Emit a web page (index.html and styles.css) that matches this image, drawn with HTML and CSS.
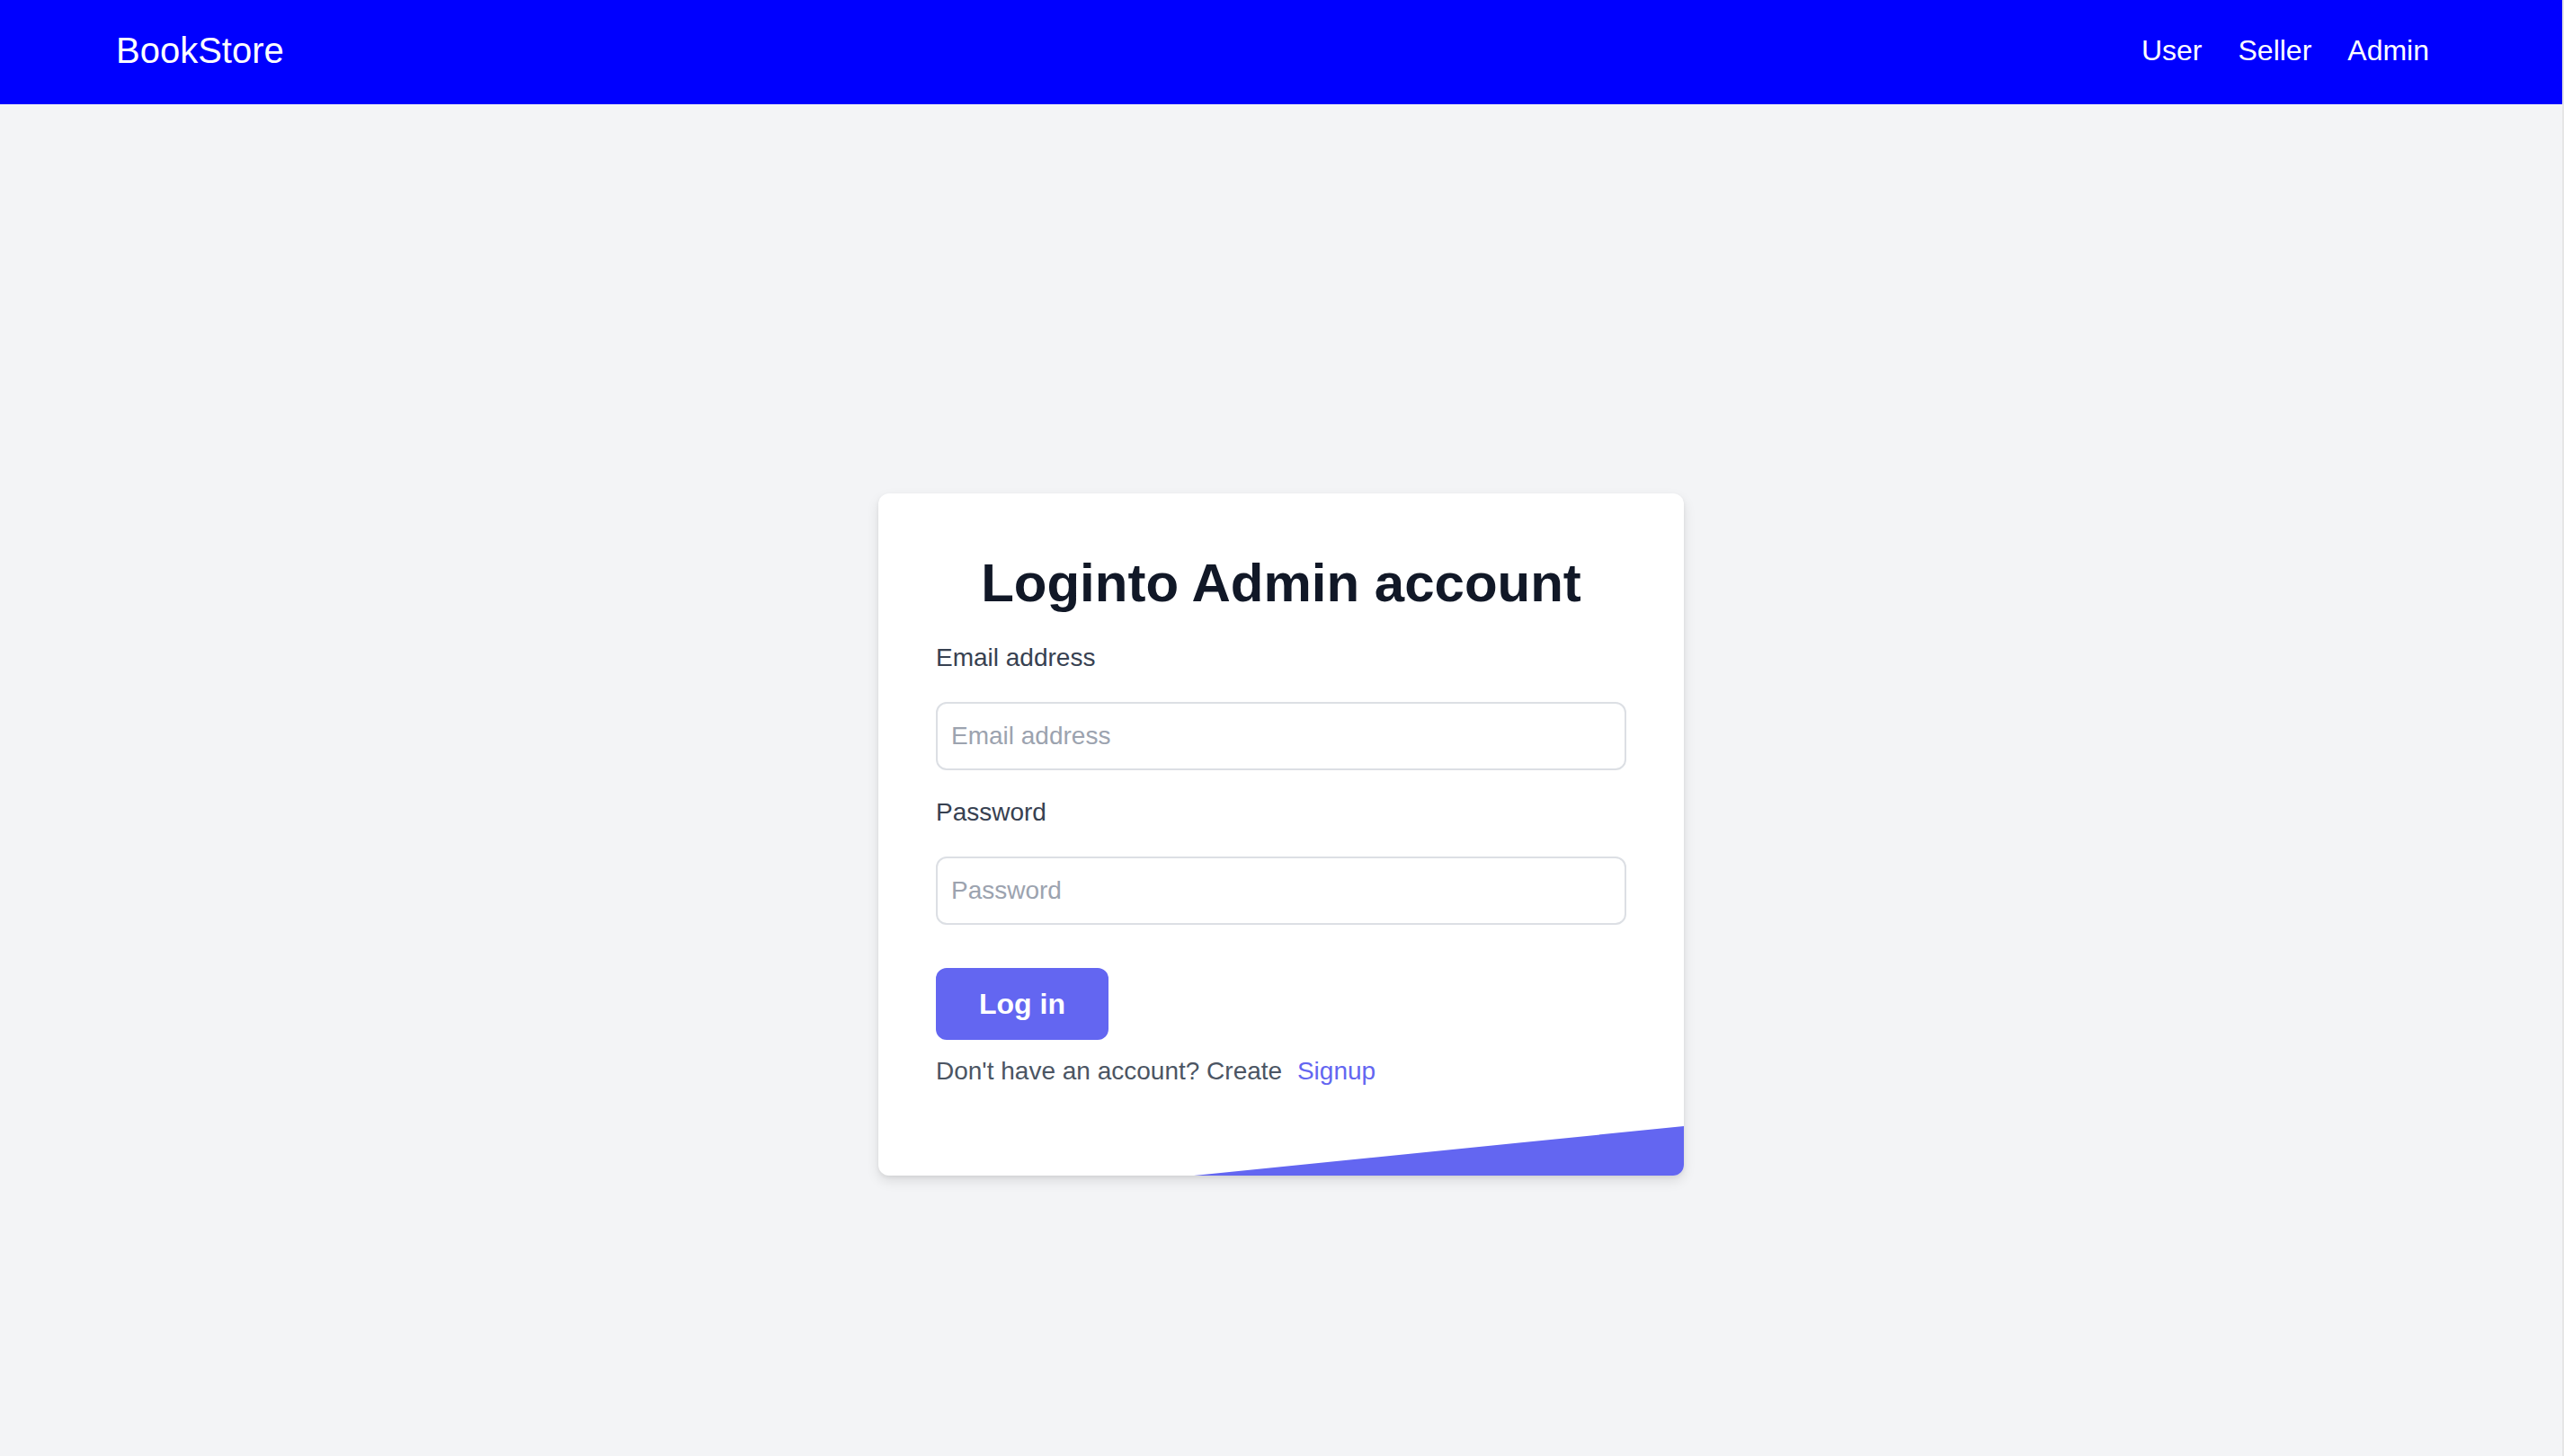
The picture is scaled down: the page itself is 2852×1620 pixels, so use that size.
FILE: index.html
```html
<!DOCTYPE html>
<html lang="en">
<head>
<meta charset="utf-8">
<title>BookStore - Admin Login</title>
<link rel="stylesheet" href="styles.css">
</head>
<body>
  <header class="navbar">
    <a class="brand" href="#">BookStore</a>
    <nav class="nav-links">
      <a href="#">User</a>
      <a href="#">Seller</a>
      <a href="#">Admin</a>
    </nav>
  </header>
  <main class="main">
    <div class="card">
      <h1 class="title">Loginto Admin account</h1>
      <form class="form">
        <label class="label" for="email">Email address</label>
        <input class="input" id="email" type="email" placeholder="Email address">
        <label class="label" for="password">Password</label>
        <input class="input" id="password" type="password" placeholder="Password">
        <button class="btn" type="button">Log in</button>
        <p class="signup">Don't have an account? Create <a href="#" class="signup-link">Signup</a></p>
      </form>
      <svg class="wedge" viewBox="0 0 896 55" preserveAspectRatio="none" aria-hidden="true">
        <polygon points="351,55 896,0 896,55" fill="#6366f1"/>
      </svg>
    </div>
  </main>
</body>
</html>
```
FILE: styles.css
```css
html {
  background: #e6e6e6;
  overflow: hidden;
}
body {
  margin: 0 2px 0 0;
  min-height: 100vh;
  background: #f3f4f6;
  font-family: "Liberation Sans", Arial, Helvetica, sans-serif;
}
.navbar {
  height: 116px;
  background: #0000ff;
  display: flex;
  align-items: center;
  justify-content: space-between;
  padding: 0 148px 0 129px;
  box-sizing: border-box;
}
.brand {
  color: #fff;
  font-size: 40px;
  text-decoration: none;
  margin-top: -3px;
}
.nav-links {
  display: flex;
  gap: 40px;
  margin-top: -3px;
}
.nav-links a {
  color: #fff;
  font-size: 32px;
  text-decoration: none;
}
.main {
  display: flex;
  justify-content: center;
  padding-top: 433px;
}
.card {
  position: relative;
  width: 896px;
  box-sizing: border-box;
  background: #fff;
  border-radius: 12px;
  overflow: hidden;
  padding: 64px 64px 96px;
  box-shadow: 0 6px 14px rgba(0, 0, 0, 0.1), 0 2px 4px rgba(0, 0, 0, 0.06);
}
.title {
  margin: 0 0 27px;
  text-align: center;
  font-size: 60px;
  line-height: 72px;
  font-weight: 700;
  color: #111827;
}
.form {
  display: flex;
  flex-direction: column;
  align-items: flex-start;
}
.label {
  display: block;
  font-size: 28px;
  line-height: 40px;
  color: #374151;
  margin-bottom: 29px;
}
.input {
  width: 100%;
  height: 76px;
  box-sizing: border-box;
  border: 2px solid #dcdfe4;
  border-radius: 12px;
  padding: 0 15px;
  font-family: inherit;
  font-size: 28px;
  color: #111827;
  margin: 0 0 27px;
  outline: none;
  background: #fff;
}
.input::placeholder {
  color: #9ca3af;
}
#password {
  margin-bottom: 48px;
}
.btn {
  width: 192px;
  height: 80px;
  border: none;
  border-radius: 12px;
  background: #6366f1;
  color: #fff;
  font-family: inherit;
  font-size: 32px;
  font-weight: 700;
  cursor: pointer;
  padding: 0;
}
.signup {
  margin: 15px 0 0;
  font-size: 28px;
  line-height: 40px;
  color: #4b5563;
}
.signup-link {
  color: #6366f1;
  text-decoration: none;
  margin-left: 9px;
}
.wedge {
  position: absolute;
  left: 0;
  bottom: 0;
  width: 100%;
  height: 55px;
  display: block;
}
```
